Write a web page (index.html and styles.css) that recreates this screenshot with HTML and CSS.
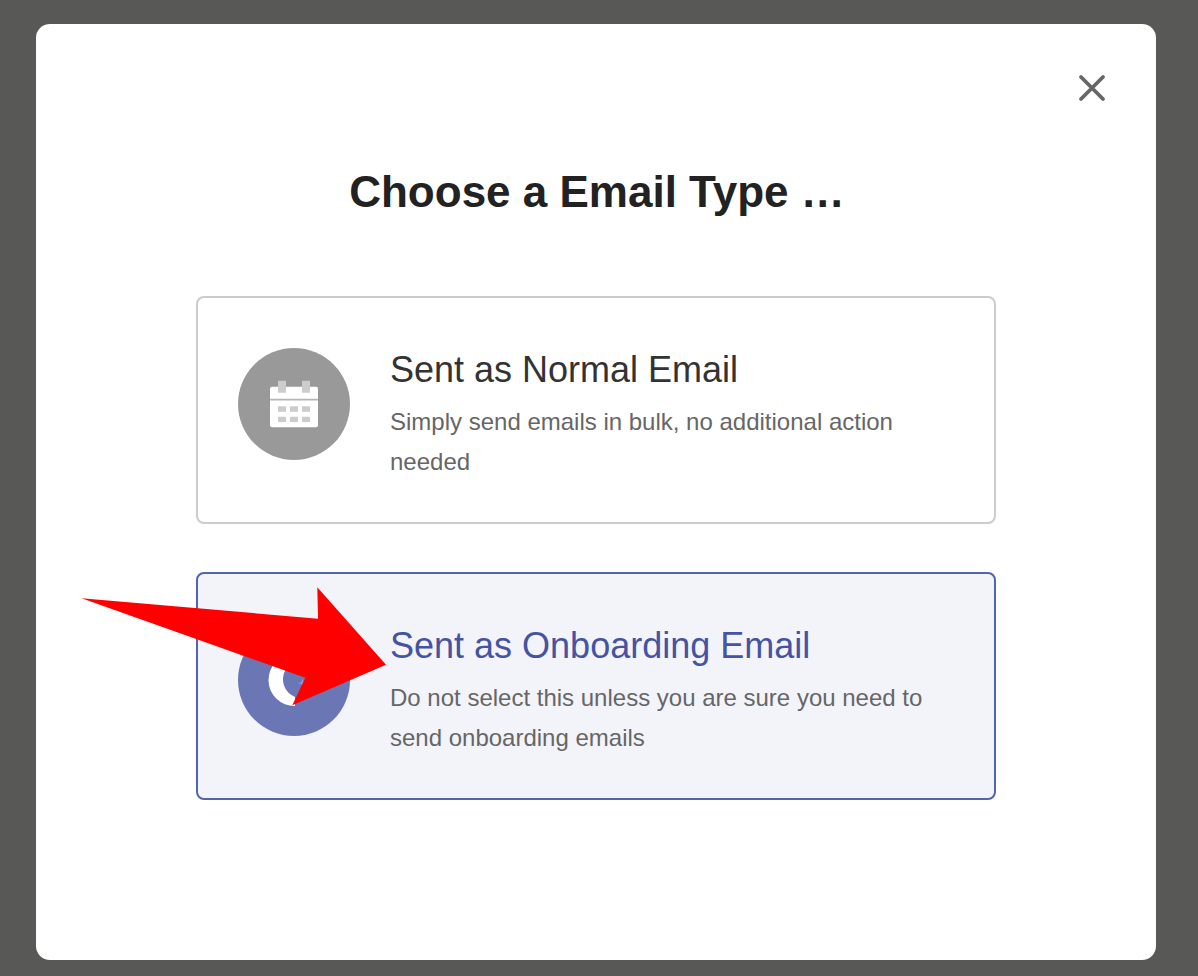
FILE: index.html
```html
<!DOCTYPE html>
<html lang="en">
<head>
    <meta charset="UTF-8">
    <meta name="viewport" content="width=device-width, initial-scale=1.0">
    <title>Choose a Email Type</title>
    <link rel="stylesheet" href="styles.css">
</head>
<body>
    <div class="modal">
        <button class="close-btn" aria-label="Close">
            <svg width="28" height="28" viewBox="0 0 28 28">
                <path d="M3 3 L25 25 M25 3 L3 25" stroke="#666" stroke-width="3.8" stroke-linecap="round" fill="none"/>
            </svg>
        </button>
        <h1>Choose a Email Type …</h1>
        <div class="options">
            <div class="option">
                <div class="option-icon">
                    <svg width="50" height="48" viewBox="0 0 50 48">
                        <path d="M3 6.7 H47 Q49 6.7 49 8.7 V45.3 Q49 47.3 47 47.3 H3 Q1 47.3 1 45.3 V8.7 Q1 6.7 3 6.7 Z" fill="#fff"/>
                        <path d="M1 18.8 H49 V20.5 H1 Z" fill="#b5b5b5"/>
                        <path d="M9 0.7 H17 V12.7 H9 Z M33 0.7 H41 V12.7 H33 Z" fill="#ccc"/>
                        <path d="M9 26.3 H17 V31.7 H9 Z M21 26.3 H29 V31.7 H21 Z M33 26.3 H41 V31.7 H33 Z M9 36.7 H17 V42 H9 Z M21 36.7 H29 V42 H21 Z M33 36.7 H41 V42 H33 Z" fill="#ccc"/>
                    </svg>
                </div>
                <div class="option-text">
                    <h3>Sent as Normal Email</h3>
                    <p>Simply send emails in bulk, no additional action needed</p>
                </div>
            </div>
            <div class="option selected">
                <div class="option-icon">
                    <svg width="60" height="60" viewBox="0 0 60 60">
                        <path d="M31 56 A26 26 0 0 1 30 4 L33 11 A19 19 0 0 0 31 47 Z" fill="#fff"/>
                        <path d="M38.5 28.5 L39.5 32 L43 33 L39.5 34 L38.5 37.5 L37.5 34 L34 33 L37.5 32 Z" fill="#8f9cd8"/>
                    </svg>
                </div>
                <div class="option-text">
                    <h3>Sent as Onboarding Email</h3>
                    <p>Do not select this unless you are sure you need to send onboarding emails</p>
                </div>
            </div>
        </div>
    </div>
    <svg class="arrow" width="1198" height="976" viewBox="0 0 1198 976">
        <polygon points="81.5,598.3 318,618.7 317.3,587.3 386,664.7 292.3,705.3 305.3,677.7" fill="#ff0000"/>
    </svg>
</body>
</html>
```

FILE: styles.css
```css
html, body {
    height: 100%;
}

body {
    font-family: 'Liberation Sans', Arial, sans-serif;
    margin: 0;
    padding: 24px 42px 16px 36px;
    box-sizing: border-box;
    background-color: #585856;
    overflow: hidden;
}

.modal {
    position: relative;
    height: 936px;
    background: white;
    border-radius: 14px;
    display: flex;
    flex-direction: column;
    align-items: center;
}

.close-btn {
    position: absolute;
    top: 50px;
    right: 50px;
    padding: 0;
    border: 0;
    background: none;
    line-height: 0;
}

h1 {
    margin: 142px 0 0;
    padding-left: 2px;
    font-size: 44px;
    line-height: 52px;
    font-weight: 700;
    color: #222;
}

.options {
    width: 800px;
    margin-top: 78px;
    display: flex;
    flex-direction: column;
    gap: 48px;
}

.option {
    height: 228px;
    box-sizing: border-box;
    padding: 50px 40px 0;
    display: flex;
    align-items: flex-start;
    gap: 40px;
    background: white;
    border: 2px solid #ccc;
    border-radius: 8px;
}

.option-icon {
    width: 112px;
    height: 112px;
    flex: none;
    border-radius: 50%;
    background: #999;
    display: flex;
    align-items: center;
    justify-content: center;
}

.option-text h3 {
    margin: 0;
    font-size: 36px;
    line-height: 44px;
    font-weight: 400;
    color: #333;
}

.option-text p {
    margin: 10px 0 0;
    font-size: 24px;
    line-height: 40px;
    color: #666;
}

.selected {
    background: #f3f4fa;
    border-color: #5265ab;
}

.selected .option-icon {
    background: #6a77b4;
}

.selected h3 {
    color: #4453a3;
}

.arrow {
    position: absolute;
    left: 0;
    top: 0;
    pointer-events: none;
}
```
